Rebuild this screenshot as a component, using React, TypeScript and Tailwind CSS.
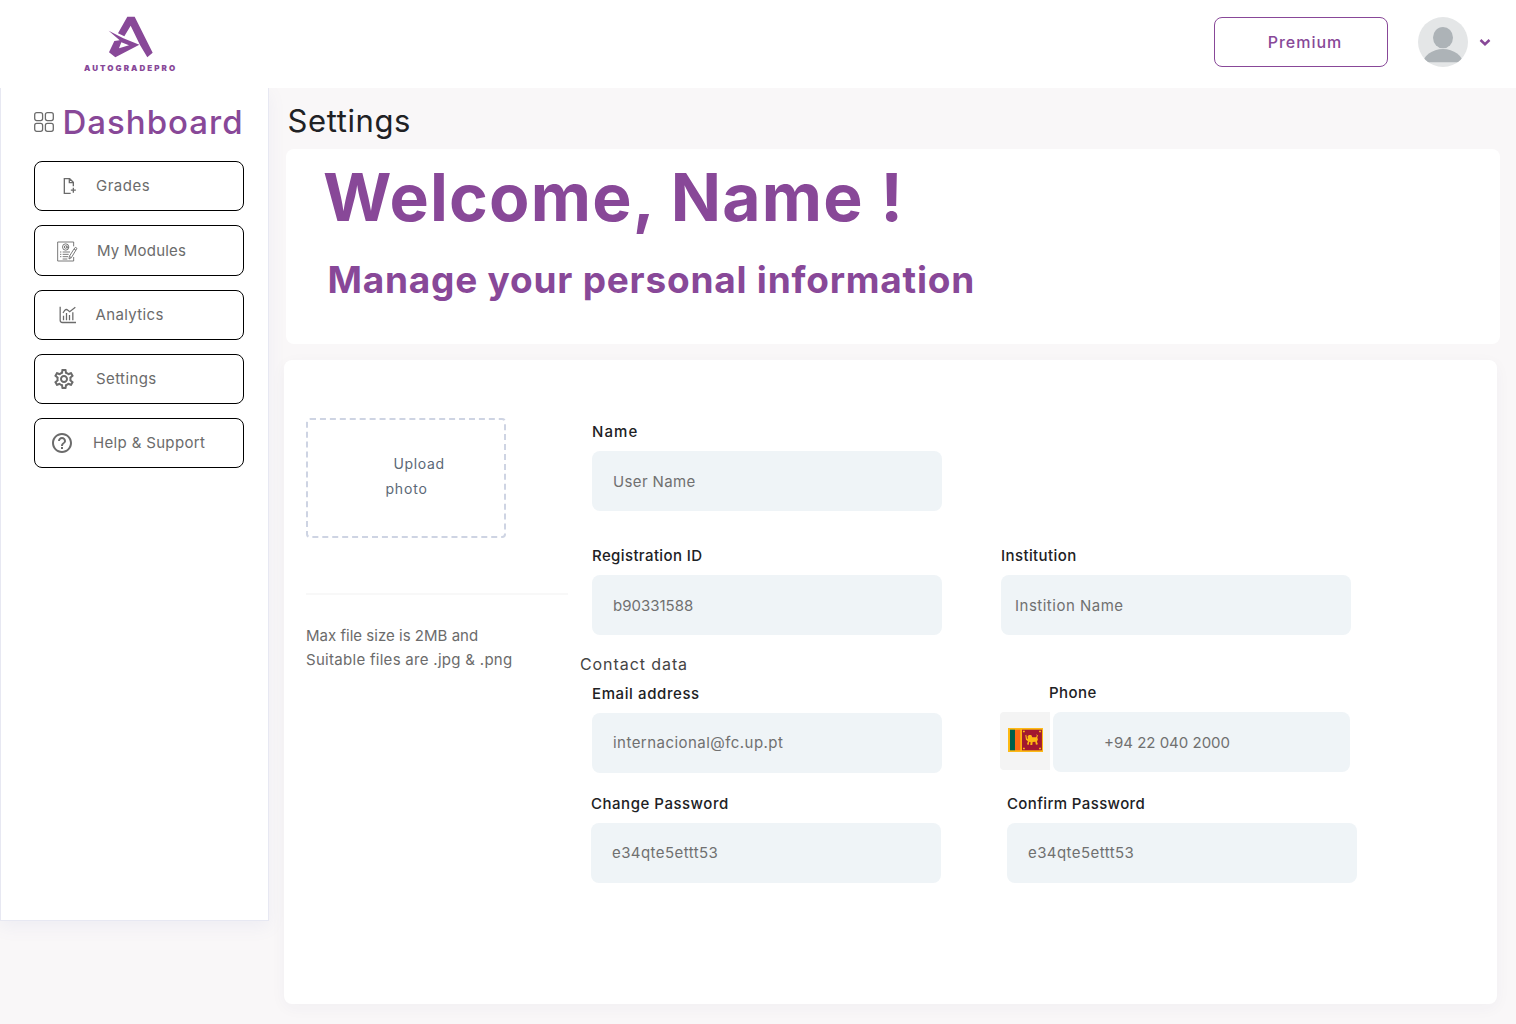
import type { ReactNode } from "react";
import { MdHelpOutline, MdOutlineSettings } from "react-icons/md";

function Logo() {
  return (
    <div className="ml-[70px] flex h-20 w-[120px] flex-col pt-[5px] text-[#884898]">
      <svg viewBox="0 0 360 165" className="h-[55px] w-[120px] shrink-0" fill="currentColor">
        <path d="M172 35H194L248 143L232 157L210 120L182 62L163 94L144 85Z" />
        <path
          fillRule="evenodd"
          d="M116 77L160 100L208 119L136 157L117 142L133 108L149 106ZM154 112L147 130L177 121Z"
        />
      </svg>
      <span className="mt-px ml-[14px] text-[8px] leading-[15px] font-black tracking-[2.05px] whitespace-nowrap">
        AUTOGRADEPRO
      </span>
    </div>
  );
}

function Avatar() {
  return (
    <svg viewBox="0 0 50 50" className="ml-[30px] size-[50px]">
      <defs>
        <clipPath id="avatar-bust">
          <rect width="50" height="45.2" />
        </clipPath>
        <clipPath id="avatar-round">
          <circle cx="25" cy="25" r="25" />
        </clipPath>
      </defs>
      <circle cx="25" cy="25" r="25" fill="#e4e6e7" />
      <ellipse cx="25" cy="20.6" rx="10" ry="10.7" fill="#adb3b7" />
      <g clipPath="url(#avatar-bust)">
        <ellipse cx="25" cy="47" rx="20" ry="15" fill="#adb3b7" clipPath="url(#avatar-round)" />
      </g>
    </svg>
  );
}

function FileIcon() {
  return (
    <svg viewBox="171 282 72 72" className="ml-[22px] size-6 shrink-0" fill="none" stroke="currentColor" strokeWidth="4">
      <path d="M212 340H193V296H209L220 307V319M208 296V308H220M220 323V338M212.5 330.5H227.5" />
    </svg>
  );
}

function ModulesIcon() {
  return (
    <svg viewBox="165 476 72 72" className="ml-5 size-6 shrink-0" fill="none" stroke="currentColor" strokeWidth="2.7">
      <path d="M221 498V485H173V542H221V530" />
      <circle cx="197" cy="500" r="9.5" />
      <circle cx="197" cy="500" r="4" />
      <path d="M201 496V502Q204 505 206 501" />
      <path d="M180 515H184M188 515H210M180 522H184M188 522H206M180 529H184M188 529H204M188 536H202" />
      <path d="M226 501L231 504L214 532L207 536L208 528L222 506Z M222 506L228 510M208 528L214 532" />
    </svg>
  );
}

function ChartIcon() {
  return (
    <svg viewBox="168 69 72 72" className="ml-[21px] size-6 shrink-0" fill="none" stroke="currentColor" strokeWidth="3.8">
      <path d="M180.500 80V121Q180.500 127.500 187 127.500H228" />
      <path d="M189 99L194 91Q199 86 204 91L209 95L226 82" strokeWidth="3.600" />
      <path d="M190.500 121V107M199.500 121V99M208.500 121V105M218.500 121V97" />
    </svg>
  );
}

function GridIcon() {
  return (
    <svg viewBox="0 0 20 20" className="-mt-px size-5 shrink-0" fill="none" stroke="#6b6b6b" strokeWidth="1.3">
      <rect x="0.700" y="0.700" width="7.900" height="7.900" rx="2" />
      <rect x="11.400" y="0.700" width="7.900" height="7.900" rx="2" />
      <rect x="0.700" y="11.400" width="7.900" height="7.900" rx="2" />
      <rect x="11.400" y="11.400" width="7.900" height="7.900" rx="2" />
    </svg>
  );
}

function Flag() {
  return (
    <svg viewBox="0 0 107 72" className="h-6 w-[35.6px]">
      <rect width="107" height="72" fill="#fdb913" />
      <rect x="6" y="5" width="15" height="62" fill="#005f4b" />
      <rect x="21" y="5" width="16" height="62" fill="#ff6a13" />
      <rect x="42" y="5" width="60" height="62" fill="#a2182f" />
      <g fill="#fdb913">
        <path d="M45 8h6l-1 5h-5zM99 8h-6l1 5h5zM45 64h6l-1-5h-5zM99 64h-6l1-5h5z" />
        <path d="M52 22L55 20L57 31L60 34L59 25L63 21L70 21L73 28L84 28L87 23L84 19L90 22L88 29L90 34L87 41L90 49L84 50L82 41L74 42L73 51L67 51L68 43L64 41L62 51L57 49L60 40L54 35Z" />
      </g>
    </svg>
  );
}

function NavButton({ icon, label, text, box }: { icon: ReactNode; label: string; text: string; box: string }) {
  return (
    <button className={`flex w-[210px] items-center rounded-lg border border-black text-left text-[15px] text-[#6b6b6b] ${box}`}>
      {icon}
      <span className={`whitespace-nowrap ${text}`}>{label}</span>
    </button>
  );
}

function Sidebar() {
  return (
    <aside className="h-[833px] w-[269px] shrink-0 border-x border-b border-[#e7e8f2] bg-white pl-[33px] shadow-[0_6px_16px_rgba(120,130,190,0.08)]">
      <div className="flex h-[68px] items-center">
        <GridIcon />
        <h2 className="ml-[8.500px] text-[33px] leading-10 font-medium tracking-[1px] text-[#884898]">Dashboard</h2>
      </div>
      <nav className="mt-[5px] flex flex-col">
        <NavButton icon={<FileIcon />} label="Grades" text="ml-[15px] tracking-[0.5px]" box="h-[50px]" />
        <NavButton icon={<ModulesIcon />} label="My Modules" text="ml-[18px] pt-0.5 tracking-[0.19px]" box="mt-[14px] h-[51px]" />
        <NavButton icon={<ChartIcon />} label="Analytics" text="ml-[15.500px] tracking-[0.36px]" box="mt-[14px] h-[50px]" />
        <NavButton
          icon={<MdOutlineSettings className="ml-[17px] size-6 shrink-0" />}
          label="Settings"
          text="ml-[20px] tracking-[0.4px]"
          box="mt-[14px] h-[50px]"
        />
        <NavButton
          icon={<MdHelpOutline className="ml-[15px] size-6 shrink-0" />}
          label="Help &amp; Support"
          text="ml-[19px] tracking-[0.34px]"
          box="mt-[14px] h-[50px]"
        />
      </nav>
    </aside>
  );
}

function Label({ children, className }: { children: ReactNode; className: string }) {
  return (
    <div className={`mb-2 h-6 pt-px text-[15px] leading-6 font-medium whitespace-nowrap text-[#202124] ${className}`}>{children}</div>
  );
}

function Value({ children, className }: { children: ReactNode; className: string }) {
  return (
    <div className={`flex h-[60px] items-center rounded-lg bg-[#eff4f7] text-[15px] whitespace-nowrap text-[#707070] ${className}`}>
      {children}
    </div>
  );
}

function UploadColumn() {
  return (
    <div className="w-[262px] shrink-0 pt-[57.500px]">
      <div className="h-[120px] w-[200px] rounded-sm border-2 border-dashed border-[#ced4e3] pt-[31px] text-[14px] leading-[26px] text-[#5b6876]">
        <div className="ml-[85.500px] tracking-[0.65px]">Upload</div>
        <div className="-mt-px ml-[77.500px] tracking-[0.8px]">photo</div>
      </div>
      <div className="mt-[55.500px] h-0.5 bg-[#f8f8f8]" />
      <div className="mt-[29px] text-[15px] leading-6 whitespace-nowrap text-[#6b6b6b]">
        <div className="tracking-[0.02px]">Max file size is 2MB and</div>
        <div className="tracking-[0.29px]">Suitable files are .jpg &amp; .png</div>
      </div>
    </div>
  );
}

function Fields() {
  return (
    <div className="ml-3 pt-[59px]">
      <div className="pl-3">
        <Label className="tracking-[1.1px]">Name</Label>
        <Value className="w-[350px] pt-0.5 pl-[21px] tracking-[0.38px]">User Name</Value>
      </div>
      <div className="mt-8 flex gap-[59px] pl-3">
        <div>
          <Label className="tracking-[0.38px]">Registration ID</Label>
          <Value className="w-[350px] pt-0.5 pl-[21px]">b90331588</Value>
        </div>
        <div>
          <Label className="tracking-[0.4px]">Institution</Label>
          <Value className="w-[350px] pt-[3px] pl-[14px] tracking-[0.5px]">Instition Name</Value>
        </div>
      </div>
      <h3 className="mt-[17px] mb-[5px] text-base leading-6 tracking-[0.92px] text-[#444444]">Contact data</h3>
      <div className="flex gap-[58px] pl-3">
        <div>
          <Label className="tracking-[0.6px]">Email address</Label>
          <Value className="w-[350px] pl-[21px] tracking-[0.46px]">internacional@fc.up.pt</Value>
        </div>
        <div className="-mt-px">
          <Label className="pl-[49px] tracking-[0.44px]">Phone</Label>
          <div className="flex gap-[3px]">
            <div className="flex h-[58px] w-[50px] justify-center rounded-l-sm bg-[#f4f4f4] pt-4 pl-px">
              <Flag />
            </div>
            <Value className="w-[297px] pt-0.5 pl-[51px]">+94 22 040 2000</Value>
          </div>
        </div>
      </div>
      <div className="mt-[18px] flex gap-[66px] pl-[11px]">
        <div>
          <Label className="tracking-[0.52px]">Change Password</Label>
          <Value className="w-[350px] pl-[21px] tracking-[0.43px]">e34qte5ettt53</Value>
        </div>
        <div>
          <Label className="tracking-[0.37px]">Confirm Password</Label>
          <Value className="w-[350px] pl-[21px] tracking-[0.43px]">e34qte5ettt53</Value>
        </div>
      </div>
    </div>
  );
}

export default function App() {
  return (
    <div className="h-[1024px] w-[1516px] overflow-hidden bg-[#f9f7f8] font-['Inter','Liberation_Sans',sans-serif]">
      <header className="relative z-10 flex h-[88px] items-start justify-between bg-white">
        <Logo />
        <div className="flex items-center pt-[17px] pr-[25px]">
          <button className="h-[50px] w-[174px] rounded-lg border border-[#884898] pl-2 text-base font-medium tracking-[1px] text-[#884898]">
            Premium
          </button>
          <Avatar />
          <svg viewBox="0 0 12 9" className="ml-[11px] h-[9px] w-3" fill="none" stroke="#884898" strokeWidth="2.5">
            <path d="M1.500 2L6 6.200L10.500 2" />
          </svg>
        </div>
      </header>
      <div className="flex items-start">
        <Sidebar />
        <main className="pt-[13px] pl-[15px]">
          <h1 className="pl-[3.500px] text-[31px] leading-10 tracking-[0.6px] text-[#202124]">Settings</h1>
          <section className="mt-2 ml-0.5 h-[195px] w-[1214px] rounded-lg bg-white pt-2 font-bold text-[#884898]">
            <div className="pl-[37px] text-[66px] leading-[80px] tracking-[1.2px]">Welcome, Name !</div>
            <div className="mt-[19px] pl-[41.500px] text-[37px] leading-[48px] tracking-[0.78px]">
              Manage your personal information
            </div>
          </section>
          <section className="mt-4 flex h-[644px] w-[1213px] rounded-lg bg-white pl-[22px] shadow-[0_4px_16px_rgba(60,60,90,0.04)]">
            <UploadColumn />
            <Fields />
          </section>
        </main>
      </div>
    </div>
  );
}
